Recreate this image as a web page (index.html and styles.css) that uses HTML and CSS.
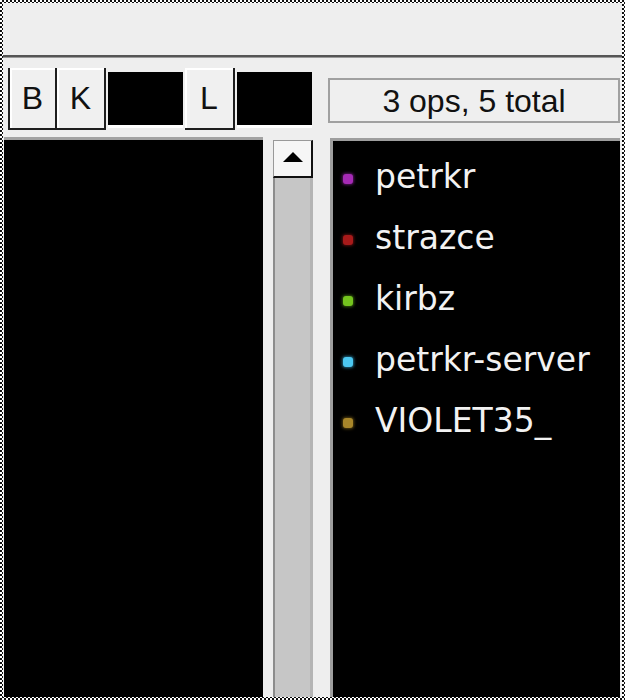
FILE: index.html
```html
<!DOCTYPE html>
<html lang="en">
<head>
    <meta charset="UTF-8">
    <meta name="viewport" content="width=device-width, initial-scale=1.0">
    <title>Channel users</title>
    <link rel="stylesheet" href="styles.css">
</head>
<body>
    <div class="window">
        <div class="titlebar"></div>

        <div class="toolbar">
            <div class="tool-btn first">B</div>
            <div class="tool-btn">K</div>
            <div class="entry"></div>
            <div class="tool-btn wide">L</div>
            <div class="entry"></div>
            <div class="status">3 ops, 5 total</div>
        </div>

        <div class="panes">
            <div class="pane-left"></div>

            <div class="scrollbar">
                <div class="scroll-up"><span class="arrow"></span></div>
                <div class="trough"></div>
            </div>

            <div class="pane-right">
                <ul class="users">
                    <li><span class="dot purple"></span>petrkr</li>
                    <li><span class="dot red"></span>strazce</li>
                    <li><span class="dot green"></span>kirbz</li>
                    <li><span class="dot cyan"></span>petrkr-server</li>
                    <li><span class="dot gold"></span>VIOLET35_</li>
                </ul>
            </div>
        </div>
    </div>
</body>
</html>
```

FILE: styles.css
```css
body {
    margin: 0;
    font-family: "Liberation Sans", Arial, sans-serif;
    background: repeating-conic-gradient(#111 0 25%, #fff 0 50%) 0 0 / 4px 4px;
}
.window {
    margin: 3px;
    height: 694px;
    background-color: #eeeeee;
    display: flex;
    flex-direction: column;
    overflow: hidden;
}
.titlebar {
    flex: none;
    height: 52px;
    border-bottom: 2px solid #555;
    box-shadow: 0 1px 0 #9a9a9a;
    margin-bottom: 1px;
}

/* toolbar row */
.toolbar {
    flex: none;
    display: flex;
    align-items: flex-start;
    height: 79px;
    box-sizing: border-box;
    padding: 10px 0 0 5px;
}
.tool-btn {
    width: 49px;
    height: 62px;
    box-sizing: border-box;
    border-right: 2px solid #1e1e1e;
    border-bottom: 2px solid #1e1e1e;
    background-color: #f0f0f0;
    box-shadow: inset 2px 2px 0 #fff;
    display: flex;
    align-items: center;
    justify-content: center;
    font-size: 32px;
    color: #111;
}
.tool-btn.first {
    border-left: 2px solid #1e1e1e;
}
.tool-btn.wide {
    width: 50px;
    margin-left: 2px;
}
.entry {
    width: 75px;
    height: 53px;
    margin: 4px 0 0 2px;
    background-color: #000;
    box-shadow: 0 3px 0 #fff;
}
.status {
    width: 292px;
    height: 45px;
    margin: 10px 0 0 16px;
    box-sizing: border-box;
    padding-top: 1px;
    border: 2px solid #a0a0a0;
    background-color: #efefef;
    display: flex;
    align-items: center;
    justify-content: center;
    font-size: 32px;
    color: #111;
}

/* lower panes */
.panes {
    flex: 1;
    display: flex;
}
.pane-left {
    width: 259px;
    margin-left: 1px;
    border-top: 3px solid #a2a2a2;
    background-color: #000;
}
.scrollbar {
    width: 40px;
    margin: 3px 0 0 10px;
    display: flex;
    flex-direction: column;
}
.scroll-up {
    height: 38px;
    box-sizing: border-box;
    border-top: 1px solid #999;
    border-left: 1px solid #999;
    border-right: 2px solid #111;
    border-bottom: 2px solid #111;
    background-color: #f6f6f6;
    display: flex;
    align-items: center;
    justify-content: center;
}
.arrow {
    width: 0;
    height: 0;
    border-left: 10px solid transparent;
    border-right: 10px solid transparent;
    border-bottom: 10px solid #000;
    margin-bottom: 4px;
}
.trough {
    flex: 1;
    border-left: 2px solid #8c8c8c;
    border-right: 3px solid #b4b4b4;
    background-color: #c6c6c6;
}
.pane-right {
    flex: 1;
    margin: 1px 2px 0 17px;
    border-top: 3px solid #9e9e9e;
    border-left: 3px solid #9e9e9e;
    background-color: #000;
}
.users {
    list-style: none;
    margin: 0;
    padding: 5px 0 0 10px;
    font-family: "DejaVu Sans", sans-serif;
    font-size: 33px;
    line-height: 61px;
    color: #f2f2f2;
}
.dot {
    display: inline-block;
    width: 10px;
    height: 10px;
    border-radius: 3px;
    margin-right: 22px;
    vertical-align: middle;
}
.purple { background-color: #a52ab5; box-shadow: 0 0 3px 1px #5a1665; }
.red    { background-color: #a81a1a; box-shadow: 0 0 3px 1px #5a0e0e; }
.green  { background-color: #74c41e; box-shadow: 0 0 3px 1px #36600e; }
.cyan   { background-color: #4cc8f2; box-shadow: 0 0 3px 1px #236a84; }
.gold   { background-color: #a8862a; box-shadow: 0 0 3px 1px #584512; }
```
